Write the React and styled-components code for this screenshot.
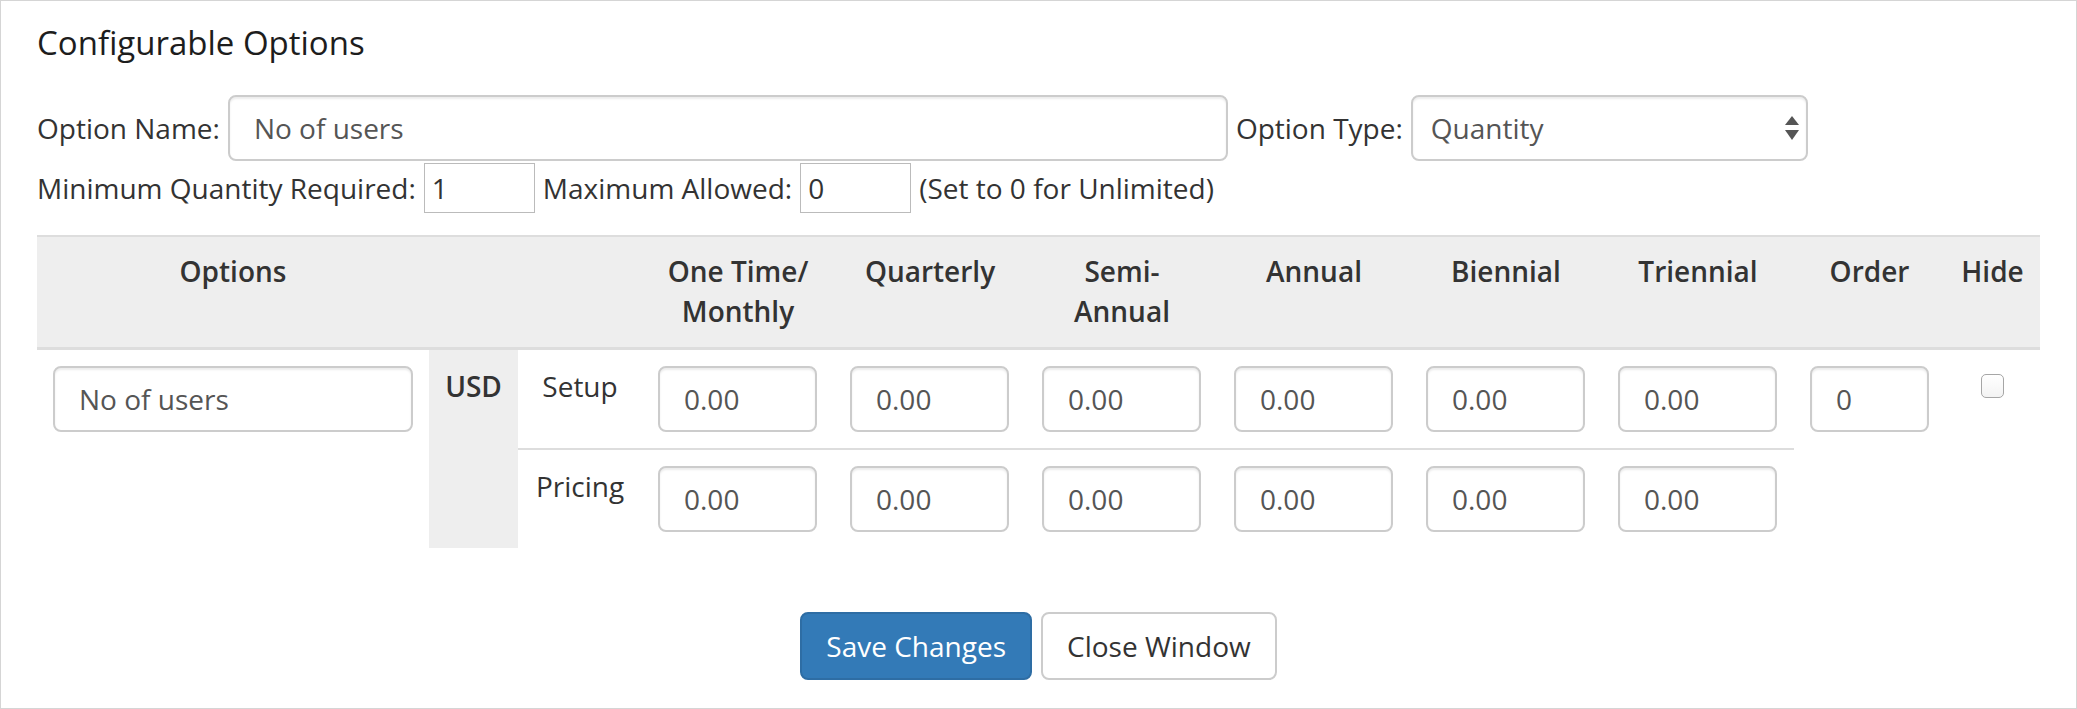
import React from "react";
import styled, { createGlobalStyle } from "styled-components";

const GlobalStyle = createGlobalStyle`
  html, body {
    margin: 0;
    padding: 0;
    background: #fff;
  }
  body {
    font-family: "Open Sans", "Liberation Sans", sans-serif;
    font-size: 28px;
    line-height: 40px;
    color: #333;
  }
  * {
    box-sizing: border-box;
  }
`;

const Window = styled.div`
  width: 2077px;
  height: 709px;
  border: 1px solid #d5d5d5;
  padding: 0 36px;
`;

const Title = styled.h2`
  margin: 22px 0 31px;
  font-size: 33px;
  font-weight: 400;
  line-height: 40px;
  color: #1d1d1d;
`;

const FieldRow = styled.div`
  display: flex;
  align-items: center;
  gap: 8px;
  height: ${(p) => p.$height}px;
  margin-top: ${(p) => p.$top || 0}px;
  white-space: nowrap;
`;

const FormControl = styled.input`
  width: ${(p) => p.$width}px;
  height: 66px;
  padding: 0 24px;
  border: 2px solid #ccc;
  border-radius: 8px;
  box-shadow: inset 0 2px 2px rgba(0, 0, 0, 0.075);
  font-family: inherit;
  font-size: 28px;
  color: #555;
  background: #fff;
  outline: none;
`;

const PlainInput = styled.input`
  width: 111px;
  height: 50px;
  padding: 0 7px;
  border: 1px solid #bbb;
  font-family: inherit;
  font-size: 28px;
  color: #333;
  outline: none;
`;

const SelectWrap = styled.div`
  position: relative;
  width: 397px;
  height: 66px;
`;

const Select = styled.select`
  appearance: none;
  width: 100%;
  height: 100%;
  padding: 0 40px 0 18px;
  border: 2px solid #ccc;
  border-radius: 8px;
  box-shadow: inset 0 2px 2px rgba(0, 0, 0, 0.075);
  background: #fff;
  font-family: inherit;
  font-size: 28px;
  color: #555;
  outline: none;
`;

const Arrows = styled.svg`
  position: absolute;
  right: 8px;
  top: 20px;
  pointer-events: none;
`;

const Table = styled.table`
  width: 100%;
  margin-top: 22px;
  border-collapse: collapse;
  table-layout: fixed;
`;

const HeadCell = styled.th`
  width: ${(p) => p.$width}px;
  padding: 14px 16px 16px;
  background: #eee;
  border-top: 2px solid #ddd;
  border-bottom: 3px solid #ddd;
  font-weight: 600;
  text-align: center;
  vertical-align: top;
  color: #333;
`;

const Cell = styled.td`
  padding: 16px;
  vertical-align: top;
  text-align: ${(p) => p.$align || "left"};
  font-weight: ${(p) => (p.$bold ? 600 : 400)};
  background: ${(p) => (p.$shade ? "#eee" : "transparent")};
  border-top: ${(p) => (p.$divider ? "2px solid #ddd" : "none")};
`;

const Check = styled.input`
  appearance: none;
  display: block;
  width: 23px;
  height: 24px;
  margin: 8px auto 0;
  border: 1px solid #a6a6a6;
  border-radius: 5px;
  background: linear-gradient(#fff, #f3f3f3);
`;

const Actions = styled.div`
  display: flex;
  justify-content: center;
  gap: 9px;
  margin-top: 64px;
`;

const Button = styled.button`
  height: 68px;
  padding: 0 24px;
  border: 2px solid ${(p) => (p.$primary ? "#2e6da4" : "#ccc")};
  border-radius: 8px;
  background: ${(p) => (p.$primary ? "#337ab7" : "#fff")};
  color: ${(p) => (p.$primary ? "#fff" : "#333")};
  font-family: inherit;
  font-size: 28px;
  line-height: 40px;
`;

const cycles = [
  { key: "monthly", label: ["One Time/", "Monthly"] },
  { key: "quarterly", label: ["Quarterly"] },
  { key: "semi", label: ["Semi-", "Annual"] },
  { key: "annual", label: ["Annual"] },
  { key: "biennial", label: ["Biennial"] },
  { key: "triennial", label: ["Triennial"] },
];

const SelectArrows = () => (
  <Arrows width="16" height="26" viewBox="0 0 16 26">
    <path d="M8 1 L15 10 H1 Z" fill="#555" />
    <path d="M1 15 H15 L8 25 Z" fill="#555" />
  </Arrows>
);

export default function App() {
  return (
    <>
      <GlobalStyle />
      <Window>
        <Title>Configurable Options</Title>

        <FieldRow $height={68}>
          <span>Option Name:</span>
          <FormControl $width={1000} defaultValue="No of users" />
          <span>Option Type:</span>
          <SelectWrap>
            <Select defaultValue="quantity">
              <option value="quantity">Quantity</option>
            </Select>
            <SelectArrows />
          </SelectWrap>
        </FieldRow>

        <FieldRow $height={50} $top={1}>
          <span>Minimum Quantity Required:</span>
          <PlainInput defaultValue="1" />
          <span>Maximum Allowed:</span>
          <PlainInput defaultValue="0" />
          <span>(Set to 0 for Unlimited)</span>
        </FieldRow>

        <Table>
          <thead>
            <tr>
              <HeadCell $width={392}>Options</HeadCell>
              <HeadCell $width={89} />
              <HeadCell $width={124} />
              {cycles.map((c) => (
                <HeadCell key={c.key} $width={192}>
                  {c.label.map((line, i) => (
                    <React.Fragment key={line}>
                      {i > 0 && <br />}
                      {line}
                    </React.Fragment>
                  ))}
                </HeadCell>
              ))}
              <HeadCell $width={151}>Order</HeadCell>
              <HeadCell $width={95}>Hide</HeadCell>
            </tr>
          </thead>
          <tbody>
            <tr>
              <Cell rowSpan={2}>
                <FormControl $width={360} defaultValue="No of users" />
              </Cell>
              <Cell rowSpan={2} $shade $bold $align="center">
                USD
              </Cell>
              <Cell $align="center">Setup</Cell>
              {cycles.map((c) => (
                <Cell key={c.key}>
                  <FormControl $width={159} defaultValue="0.00" />
                </Cell>
              ))}
              <Cell rowSpan={2}>
                <FormControl $width={119} defaultValue="0" />
              </Cell>
              <Cell rowSpan={2}>
                <Check type="checkbox" />
              </Cell>
            </tr>
            <tr>
              <Cell $align="center" $divider>
                Pricing
              </Cell>
              {cycles.map((c) => (
                <Cell key={c.key} $divider>
                  <FormControl $width={159} defaultValue="0.00" />
                </Cell>
              ))}
            </tr>
          </tbody>
        </Table>

        <Actions>
          <Button $primary>Save Changes</Button>
          <Button>Close Window</Button>
        </Actions>
      </Window>
    </>
  );
}
